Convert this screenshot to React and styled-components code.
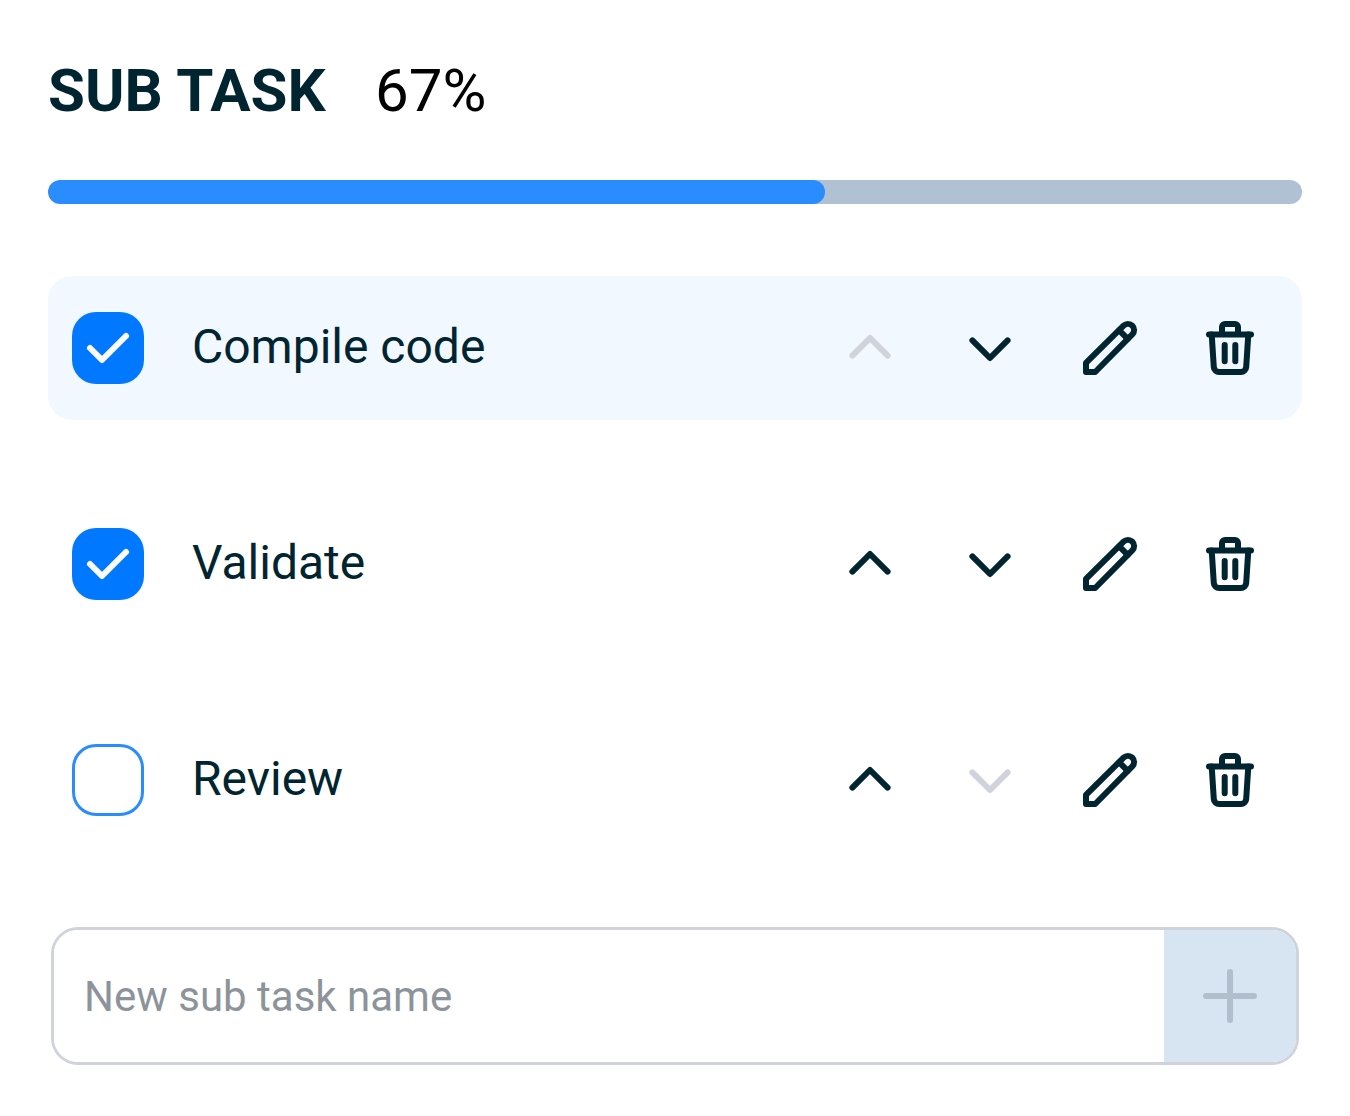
import React, { useState } from 'react';
import styled, { createGlobalStyle } from 'styled-components';

const GlobalStyle = createGlobalStyle`
  *, *::before, *::after { box-sizing: border-box; }
  body {
    margin: 0;
    background: #fff;
    font-family: Roboto, "Liberation Sans", sans-serif;
    color: #002430;
  }
`;

const Panel = styled.main`
  display: flex;
  flex-direction: column;
  width: 1350px;
  height: 1116px;
  padding: 55px 48px 0;
`;

const Header = styled.header`
  display: flex;
  align-items: center;
  gap: 49.5px;
  height: 72px;
  font-size: 60px;
  line-height: 72px;
`;

const Title = styled.h1`
  margin: 0;
  font-size: inherit;
  font-weight: 700;
  white-space: nowrap;
`;

const Percent = styled.span`
  color: #000;
`;

const Track = styled.div`
  height: 24px;
  margin-top: 53px;
  border-radius: 12px;
  background: #b0c1d4;
  overflow: hidden;
`;

const Fill = styled.div`
  height: 100%;
  border-radius: 12px;
  background: #298cff;
`;

const List = styled.ul`
  display: flex;
  flex-direction: column;
  gap: 72px;
  margin: 72px 0 0;
  padding: 0;
  list-style: none;
`;

const Row = styled.li`
  display: flex;
  align-items: center;
  height: 144px;
  padding: 0 24px;
  border-radius: 24px;
  background: ${({ $active }) => ($active ? '#f1f8ff' : 'transparent')};
`;

const Checkbox = styled.button`
  flex: none;
  display: block;
  width: 72px;
  height: 72px;
  padding: 0;
  border-radius: 24px;
  border: ${({ $checked }) => ($checked ? '0' : '3px solid #298cff')};
  background: ${({ $checked }) => ($checked ? '#0078ff' : '#fff')};
  color: #fff;
`;

const Label = styled.span`
  flex: 1;
  margin-left: 48px;
  padding-bottom: 2px;
  font-size: 48px;
  line-height: 72px;
`;

const Actions = styled.div`
  display: flex;
  gap: 48px;
  margin-right: 12px;
`;

const IconButton = styled.button`
  display: block;
  width: 72px;
  height: 72px;
  padding: 0;
  border: 0;
  background: none;
  color: ${({ disabled }) => (disabled ? '#d1d3dc' : '#002430')};
`;

const Glyph = styled.svg`
  display: block;
  width: 72px;
  height: 72px;
  fill: none;
  stroke: currentColor;
  stroke-width: 6;
  stroke-linecap: round;
  stroke-linejoin: round;
`;

const Form = styled.form`
  display: flex;
  height: 138px;
  margin: 75px 3px 0;
  border: 3px solid #d0d3dc;
  border-radius: 27px;
  overflow: hidden;
`;

const NameInput = styled.input`
  flex: 1;
  min-width: 0;
  padding: 0 30px;
  border: 0;
  outline: 0;
  background: #fff;
  color: #002430;
  font-family: inherit;
  font-size: 42px;
  &::placeholder { color: #8d939b; opacity: 1; }
`;

const AddButton = styled.button`
  display: flex;
  align-items: center;
  justify-content: center;
  width: 132px;
  padding: 0;
  border: 0;
  background: #d7e5f2;
  color: #b0bece;
`;

const Icon = ({ children }) => <Glyph viewBox="0 0 72 72" aria-hidden="true">{children}</Glyph>;
const Check = () => <Icon><path d="M18 36l12 12 24-24" /></Icon>;
const Up = () => <Icon><path d="M18.4 43.6L36 26l17.6 17.6" /></Icon>;
const Down = () => <Icon><path d="M18.4 28.4L36 46l17.6-17.6" /></Icon>;
const Pencil = () => (
  <Icon>
    <path d="M12 60V50.8L49.6 13.7a6.1 6.1 0 0 1 8.7 8.7L21.2 60Z" />
    <path d="M45.2 18.3l8.5 8.5" />
  </Icon>
);
const Trash = () => (
  <Icon>
    <path d="M15 22.5h42" />
    <path d="M28 21V15a3 3 0 0 1 3-3h10a3 3 0 0 1 3 3v6" />
    <path d="M17.7 22.5l2.1 32.5a5.3 5.3 0 0 0 5.3 5h21.8a5.3 5.3 0 0 0 5.3-5l2.1-32.5" />
    <path d="M30.7 33v16.3M41.3 33v16.3" />
  </Icon>
);
const Plus = () => <Icon><path d="M36 12v48M12 36h48" /></Icon>;

const tasks = [
  { name: 'Compile code', done: true },
  { name: 'Validate', done: true },
  { name: 'Review', done: false },
];

export default function App() {
  const [name, setName] = useState('');
  const barWidth = 777;
  return (
    <>
      <GlobalStyle />
      <Panel>
        <Header>
          <Title>SUB TASK</Title>
          <Percent>67%</Percent>
        </Header>
        <Track><Fill style={{ width: barWidth }} /></Track>
        <List>
          {tasks.map((task, i) => (
            <Row key={task.name} $active={i === 0}>
              <Checkbox type="button" role="checkbox" aria-checked={task.done} aria-label={task.name} $checked={task.done}>
                {task.done && <Check />}
              </Checkbox>
              <Label>{task.name}</Label>
              <Actions>
                <IconButton aria-label="Move up" disabled={i === 0}><Up /></IconButton>
                <IconButton aria-label="Move down" disabled={i === tasks.length - 1}><Down /></IconButton>
                <IconButton aria-label="Edit"><Pencil /></IconButton>
                <IconButton aria-label="Delete"><Trash /></IconButton>
              </Actions>
            </Row>
          ))}
        </List>
        <Form onSubmit={(e) => e.preventDefault()}>
          <NameInput placeholder="New sub task name" value={name} onChange={(e) => setName(e.target.value)} />
          <AddButton aria-label="Add"><Plus /></AddButton>
        </Form>
      </Panel>
    </>
  );
}
